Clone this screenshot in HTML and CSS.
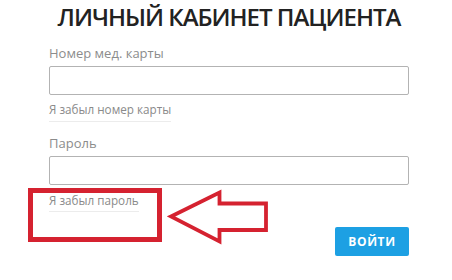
FILE: index.html
```html
<!DOCTYPE html>
<html lang="ru">
<head>
<meta charset="utf-8">
<title>Личный кабинет пациента</title>
<link rel="stylesheet" href="styles.css">
</head>
<body>
<div class="page">
  <form class="login">
    <h1 class="title">ЛИЧНЫЙ КАБИНЕТ ПАЦИЕНТА</h1>
    <div class="field">
      <label class="label">Номер мед. карты</label>
      <input class="input" type="text">
      <a class="forgot">Я забыл номер карты</a>
    </div>
    <div class="field field-second">
      <label class="label">Пароль</label>
      <input class="input" type="password">
      <a class="forgot forgot-last">Я забыл пароль</a>
    </div>
    <div class="actions">
      <button class="submit" type="button">ВОЙТИ</button>
    </div>
  </form>
  <div class="mark-box"></div>
  <svg class="mark-arrow" width="110" height="60" viewBox="0 0 110 60">
    <polygon points="4,27.5 52.5,3.5 52.5,14.5 99,14.5 99,41 52.5,41 52.5,52.5" fill="#fff" stroke="#d52230" stroke-width="3.8" stroke-linejoin="miter"/>
  </svg>
</div>
</body>
</html>
```
FILE: styles.css
```css
* { box-sizing: border-box; }
html, body { margin: 0; padding: 0; background: #fff; }
body { font-family: "Open Sans", "Liberation Sans", sans-serif; }
.page { position: relative; width: 452px; height: 280px; overflow: hidden; }
.login { width: 360px; margin-left: 49px; padding-top: 1px; display: flex; flex-direction: column; }
.title { margin: 0 -20px; font-size: 24px; line-height: 32px; font-weight: 600; color: #222; text-align: center; white-space: nowrap; letter-spacing: -1px; }
.field { display: flex; flex-direction: column; align-items: flex-start; margin-top: 11px; }
.field-second { margin-top: 12px; }
.label { font-size: 13px; line-height: 18px; color: #8c8c8c; }
.input { margin-top: 4px; width: 100%; height: 29px; border: 1px solid #b3b3b3; border-radius: 2px; background: #fff; }
.forgot { margin-top: 6px; font-size: 11.7px; line-height: 16px; color: #8a8a8a; padding-bottom: 3.5px; border-bottom: 1px solid #ececec; }
.forgot-last { margin-top: 7px; }
.actions { display: flex; justify-content: flex-end; margin-top: 15px; }
.submit { width: 74px; height: 29px; border: 0; border-radius: 2px; background: #1da0e3; color: #fff; font-family: inherit; font-size: 12px; font-weight: 700; letter-spacing: 0.6px; padding: 0; }
.mark-box { position: absolute; left: 28px; top: 188px; width: 134px; height: 54px; border: 5px solid #d52230; }
.mark-arrow { position: absolute; left: 167px; top: 189px; }
```
